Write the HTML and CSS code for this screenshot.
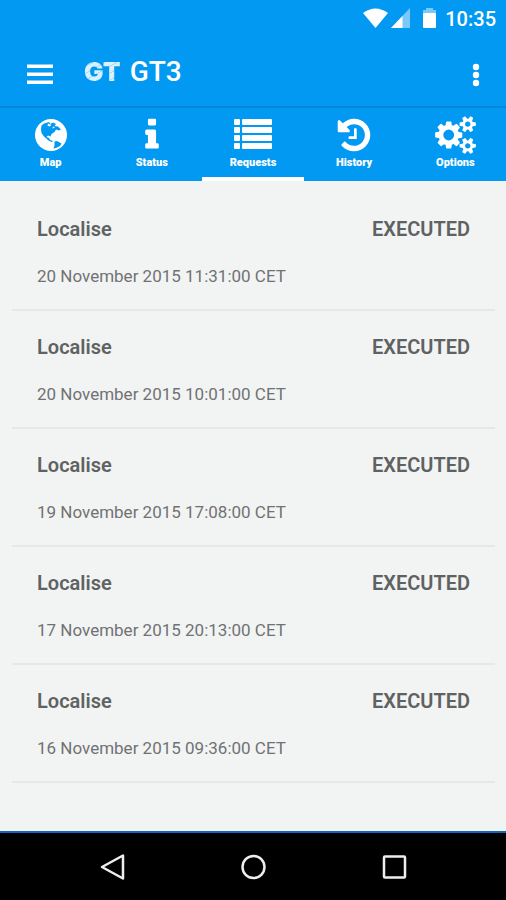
FILE: index.html
```html
<!DOCTYPE html>
<html lang="en">
<head>
<meta charset="utf-8">
<meta name="viewport" content="width=device-width, initial-scale=1">
<title>GT3 Requests</title>
<link rel="stylesheet" href="styles.css">
</head>
<body>
<div class="status-bar">
  <svg class="status-icons" viewBox="0 0 76 22" aria-hidden="true">
    <path class="white" d="M0 5Q12.500-4 25 5L12.500 20Z"/>
    <path class="faint" d="M28 20L47 0V20Z"/>
    <path class="white" d="M28 20L39.500 8V20Z"/>
    <path class="faint" d="M60 2h3V0h7v2h3v4H60z"/>
    <rect class="white" x="60" y="5" width="13" height="15" rx="1"/>
  </svg>
  <time class="clock">10:35</time>
</div>
<header class="toolbar">
  <button class="icon-button menu" aria-label="Menu">
    <svg width="28" height="20" viewBox="0 0 28 20"><path class="white" d="M1 .5h26v3.500H1zM1 8.500h26v3.500H1zM1 16.500h26v3.500H1z"/></svg>
  </button>
  <span class="logo" aria-hidden="true">GT</span>
  <h1 class="title">GT3</h1>
  <button class="icon-button more" aria-label="More options">
    <svg width="8" height="24" viewBox="0 0 8 24"><g class="white"><circle cx="4" cy="4" r="3.200"/><circle cx="4" cy="12" r="3.200"/><circle cx="4" cy="20" r="3.200"/></g></svg>
  </button>
</header>
<nav class="tabs">
  <a class="tab" href="#map">
    <svg class="tab-icon" viewBox="0 0 38 38" aria-hidden="true">
      <circle class="white" cx="19" cy="19" r="16"/>
      <path class="land" d="M9.500 9.500L12 7.500L17 6L18.500 8L21 6.500L24 8L22.500 10L26 10.500L29 13.500L26.500 14.500L24 13.500L22.500 16L19.500 18L18.500 20.500L16 19.500L14.500 21L17 22L18 24L21 25L19.500 26L16.500 24.500L12 20.500L9.500 17L9 13ZM22.500 25.500L25 25L29.500 27.500L28 30L24 32L21.500 32.500L22.500 29.500Z"/>
      <path class="white" d="M16 7.500l3.500 1.500-2 1.500-2-1zM21 10.500l2 1-2.500 1z"/>
    </svg>
    <span>Map</span>
  </a>
  <a class="tab" href="#status">
    <svg class="tab-icon" viewBox="0 0 1792 1792" aria-hidden="true"><path class="white" d="M1216 1344v128q0 26-19 45t-45 19h-512q-26 0-45-19t-19-45v-128q0-26 19-45t45-19h64v-384h-64q-26 0-45-19t-19-45v-128q0-26 19-45t45-19h384q26 0 45 19t19 45v576h64q26 0 45 19t19 45zm-128-1152v192q0 26-19 45t-45 19h-256q-26 0-45-19t-19-45v-192q0-26 19-45t45-19h256q26 0 45 19t19 45z"/></svg>
    <span>Status</span>
  </a>
  <a class="tab active" href="#requests" aria-current="page">
    <svg class="tab-icon" viewBox="0 0 38 38" aria-hidden="true"><g class="white"><rect x="0" y="3" width="6" height="6" rx="1"/><rect x="8" y="3" width="30" height="6" rx="1"/><rect x="0" y="11" width="6" height="6" rx="1"/><rect x="8" y="11" width="30" height="6" rx="1"/><rect x="0" y="19" width="6" height="6" rx="1"/><rect x="8" y="19" width="30" height="6" rx="1"/><rect x="0" y="27" width="6" height="6" rx="1"/><rect x="8" y="27" width="30" height="6" rx="1"/></g></svg>
    <span>Requests</span>
  </a>
  <a class="tab" href="#history">
    <svg class="tab-icon" viewBox="0 0 1792 1792" aria-hidden="true"><path class="white" d="M1664 896q0 156-61 298t-164 245-245 164-298 61q-172 0-327-72.5t-264-204.500q-7-10-6.500-22.500t8.500-20.500l137-138q10-9 25-9 16 2 23 12 73 95 179 147t225 52q104 0 198.500-40.500t163.500-109.500 109.500-163.500 40.500-198.500-40.500-198.500-109.500-163.500-163.500-109.500-198.500-40.500q-98 0-188 35.500t-160 101.500l137 138q31 30 14 69-17 40-59 40h-448q-26 0-45-19t-19-45v-448q0-42 40-59 39-17 69 14l130 129q107-101 244.500-156.500t284.500-55.500q156 0 298 61t245 164 164 245 61 298zm-640-288v448q0 14-9 23t-23 9h-320q-14 0-23-9t-9-23v-64q0-14 9-23t23-9h224v-352q0-14 9-23t23-9h64q14 0 23 9t9 23z"/></svg>
    <span>History</span>
  </a>
  <a class="tab" href="#options">
    <svg class="tab-icon wide" viewBox="0 0 1920 1792" aria-hidden="true"><path class="white" d="M896 896q0-106-75-181t-181-75-181 75-75 181 75 181 181 75 181-75 75-181zm768 512q0-52-38-90t-90-38-90 38-38 90q0 53 37.500 90.500t90.500 37.500 90.500-37.500 37.500-90.500zm0-1024q0-52-38-90t-90-38-90 38-38 90q0 53 37.500 90.500t90.500 37.500 90.500-37.500 37.500-90.500zm-384 421v185q0 10-7 19.500t-16 10.500l-155 24q-11 35-32 76 34 48 90 115 7 11 7 20 0 12-7 19-23 30-82.500 89.500t-78.500 59.500q-11 0-21-7l-115-90q-37 19-77 31-11 108-23 155-7 24-30 24h-186q-11 0-20-7.500t-10-17.500l-23-153q-34-10-75-31l-118 89q-7 7-20 7-11 0-21-8-144-133-144-160 0-9 7-19 10-14 41-53t47-61q-23-44-35-82l-152-24q-10-1-17-9.500t-7-19.500v-185q0-10 7-19.500t16-10.500l155-24q11-35 32-76-34-48-90-115-7-11-7-20 0-12 7-20 22-30 82-89t79-59q11 0 21 7l115 90q34-18 77-32 11-108 23-154 7-24 30-24h186q11 0 20 7.500t10 17.500l23 153q34 10 75 31l118-89q8-7 20-7 11 0 21 8 144 133 144 160 0 8-7 19-12 16-42 54t-45 60q23 48 34 82l152 23q10 2 17 10.500t7 19.500zm640 533v140q0 16-149 31-12 27-30 52 51 113 51 138 0 4-4 7-122 71-124 71-8 0-46-47t-52-68q-20 2-30 2t-30-2q-14 21-52 68t-46 47q-2 0-124-71-4-3-4-7 0-25 51-138-18-25-30-52-149-15-149-31v-140q0-16 149-31 13-29 30-52-51-113-51-138 0-4 4-7 4-2 35-20t59-34 30-16q8 0 46 46.500t52 67.500q20-2 30-2t30 2q51-71 92-112l6-2q4 0 124 70 4 3 4 7 0 25-51 138 17 23 30 52 149 15 149 31zm0-1024v140q0 16-149 31-12 27-30 52 51 113 51 138 0 4-4 7-122 71-124 71-8 0-46-47t-52-68q-20 2-30 2t-30-2q-14 21-52 68t-46 47q-2 0-124-71-4-3-4-7 0-25 51-138-18-25-30-52-149-15-149-31v-140q0-16 149-31 13-29 30-52-51-113-51-138 0-4 4-7 4-2 35-20t59-34 30-16q8 0 46 46.500t52 67.500q20-2 30-2t30 2q51-71 92-112l6-2q4 0 124 70 4 3 4 7 0 25-51 138 17 23 30 52 149 15 149 31z"/></svg>
    <span>Options</span>
  </a>
</nav>
<main class="content">
  <ul class="requests">
    <li class="request"><div class="request-head"><h2>Localise</h2><strong>EXECUTED</strong></div><time>20 November 2015 11:31:00 CET</time></li>
    <li class="request"><div class="request-head"><h2>Localise</h2><strong>EXECUTED</strong></div><time>20 November 2015 10:01:00 CET</time></li>
    <li class="request"><div class="request-head"><h2>Localise</h2><strong>EXECUTED</strong></div><time>19 November 2015 17:08:00 CET</time></li>
    <li class="request"><div class="request-head"><h2>Localise</h2><strong>EXECUTED</strong></div><time>17 November 2015 20:13:00 CET</time></li>
    <li class="request"><div class="request-head"><h2>Localise</h2><strong>EXECUTED</strong></div><time>16 November 2015 09:36:00 CET</time></li>
  </ul>
</main>
<footer class="system-nav">
  <button class="icon-button" aria-label="Back"><svg width="28" height="28" viewBox="0 0 28 28"><path class="outline" stroke-width="2.500" d="M25 2.500V25.500L4 14Z"/></svg></button>
  <button class="icon-button" aria-label="Home"><svg width="28" height="28" viewBox="0 0 28 28"><circle class="outline" stroke-width="2.500" cx="14.500" cy="14" r="11"/></svg></button>
  <button class="icon-button" aria-label="Recent apps"><svg width="28" height="28" viewBox="0 0 28 28"><rect class="outline" stroke-width="2.500" x="4" y="3.500" width="21" height="21" rx="1"/></svg></button>
</footer>
</body>
</html>
```
FILE: styles.css
```css
* {
  box-sizing: border-box;
}

body {
  margin: 0;
  min-height: 100vh;
  display: flex;
  flex-direction: column;
  background: #f2f4f4;
  font-family: Roboto, "Liberation Sans", sans-serif;
}

svg {
  display: block;
}

.white {
  fill: #fff;
}

.faint {
  fill: #7cc8f8;
}

.land {
  fill: #0299f2;
}

.outline {
  fill: none;
  stroke: #eee;
  stroke-linejoin: round;
}

.icon-button {
  padding: 0;
  border: 0;
  background: none;
}

.status-bar {
  display: flex;
  align-items: center;
  justify-content: flex-end;
  gap: 6px;
  height: 38px;
  padding-right: 10px;
  background: #0299f2;
  color: #fff;
}

.status-icons {
  width: 76px;
  height: 22px;
}

.clock {
  font-size: 20px;
  font-weight: 500;
  line-height: 24px;
}

.toolbar {
  display: flex;
  align-items: center;
  height: 70px;
  padding: 0 26px;
  border-bottom: 2px solid #0287d8;
  background: #0299f2;
  color: #fff;
}

.menu {
  margin-top: 4px;
}

.logo {
  margin-left: 30px;
  background: repeating-linear-gradient(150deg, #d9f0ff 0 5px, #a9dbfb 5px 6px);
  background-clip: text;
  color: transparent;
  font-family: Inter, sans-serif;
  font-size: 26px;
  font-weight: 900;
  line-height: 36px;
}

.title {
  margin: 0 auto 0 9px;
  font-size: 28px;
  font-weight: 500;
  line-height: 36px;
}

.more {
  margin-top: 6px;
}

.tabs {
  display: grid;
  grid-template-columns: repeat(5, 1fr);
  background: #0299f2;
}

.tab {
  display: flex;
  flex-direction: column;
  align-items: center;
  height: 73px;
  padding-top: 8px;
  border-bottom: 4px solid transparent;
  color: #fff;
  font-size: 11px;
  font-weight: 900;
  line-height: 18px;
  text-decoration: none;
}

.tab.active {
  border-bottom-color: #fff;
}

.tab-icon {
  width: 38px;
  height: 38px;
}

.tab-icon.wide {
  width: 41px;
}

.content {
  flex: 1;
  padding: 12px 11px 0 12px;
}

.requests {
  margin: 0;
  padding: 0;
  list-style: none;
}

.request {
  height: 118px;
  padding: 24px 25px 0;
  border-bottom: 2px solid #e6e8e8;
  color: #707272;
  font-size: 17px;
  line-height: 24px;
}

.request-head {
  display: flex;
  justify-content: space-between;
  margin-bottom: 23px;
  color: #606262;
}

.request-head h2,
.request-head strong {
  margin: 0;
  font-size: 20px;
  font-weight: 600;
  line-height: 24px;
}

.system-nav {
  display: grid;
  grid-template-columns: repeat(3, 141px);
  justify-content: center;
  justify-items: center;
  align-items: center;
  height: 69px;
  border-top: 2px solid #1268b8;
  background: #000;
}
```
